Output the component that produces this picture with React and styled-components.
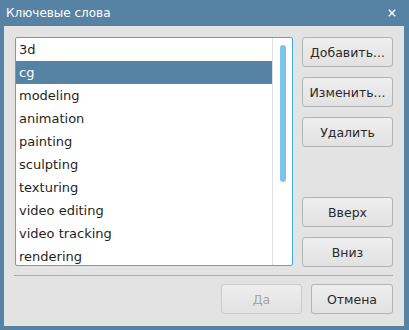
import styled, { createGlobalStyle } from "styled-components";

const Global = createGlobalStyle`
body{margin:0;background:#5682a3;font-family:"DejaVu Sans",sans-serif;}
`;

const Window = styled.div`
width:409px;
height:330px;
background:#5682a3;
display:flex;
flex-direction:column;
box-sizing:border-box;
padding:0 5px 4px 4px;
`;

const TitleBar = styled.div`
height:26px;
flex:none;
display:flex;
align-items:center;
justify-content:space-between;
color:#fff;
font-size:12px;
padding-left:2px;
padding-right:8px;
`;

const Body = styled.div`
flex:1;
background:#e3e3e3;
padding:11px 11px 12px 11px;
display:flex;
flex-direction:column;
`;

const Main = styled.div`
display:flex;
gap:9px;
height:230px;
`;

const ListBox = styled.div`
width:278px;
height:229px;
box-sizing:border-box;
border:1px solid #3daee9;
border-radius:2px;
background:#fff;
display:flex;
overflow:hidden;
`;

const Items = styled.div`
flex:1;
`;

const Item = styled.div`
height:23px;
line-height:23px;
padding-left:3px;
font-size:13px;
color:${p => (p.$sel ? "#fff" : "#1f1f1f")};
background:${p => (p.$sel ? "#5682a3" : "transparent")};
white-space:nowrap;
`;

const Track = styled.div`
width:19px;
border-left:1px solid #e0e0e0;
display:flex;
justify-content:center;
padding-top:7px;
`;

const Handle = styled.div`
width:6px;
height:137px;
border-radius:3px;
background:#7cc3ee;
`;

const Side = styled.div`
width:91px;
display:flex;
flex-direction:column;
gap:10px;
`;

const Spacer = styled.div`
flex:1;
`;

const Button = styled.button`
width:${p => p.$w || 91}px;
height:30px;
box-sizing:border-box;
border:1px solid ${p => (p.disabled ? "#cbcbcb" : "#b3b3b3")};
border-radius:3px;
background:linear-gradient(#eeeeee,#e2e2e2);
color:${p => (p.disabled ? "#a6a6a6" : "#2a2a2a")};
font-family:"DejaVu Sans",sans-serif;
font-size:12.5px;
font-weight:normal;
padding:0;
`;

const Separator = styled.div`
height:1px;
background:#ababab;
margin:8px 0 8px -1px;
`;

const Footer = styled.div`
display:flex;
justify-content:flex-end;
gap:9px;
`;

const words = ["3d", "cg", "modeling", "animation", "painting", "sculpting", "texturing", "video editing", "video tracking", "rendering"];

const App = () => {
  return <>
    <Global />
    <Window>
      <TitleBar>
        <span>Ключевые слова</span>
        <svg width="8" height="8" viewBox="0 0 8 8">
          <path d="M0.8 0.8L7.2 7.2M7.2 0.8L0.8 7.2" stroke="#fff" strokeWidth="1.5" />
        </svg>
      </TitleBar>
      <Body>
        <Main>
          <ListBox>
            <Items>
              {words.map((w, i) => <Item key={w} $sel={i === 1}>{w}</Item>)}
            </Items>
            <Track><Handle /></Track>
          </ListBox>
          <Side>
            <Button>Добавить...</Button>
            <Button>Изменить...</Button>
            <Button>Удалить</Button>
            <Spacer />
            <Button>Вверх</Button>
            <Button>Вниз</Button>
          </Side>
        </Main>
        <Separator />
        <Footer>
          <Button $w={81} disabled>Да</Button>
          <Button $w={82}>Отмена</Button>
        </Footer>
      </Body>
    </Window>
  </>
}

export default App;
